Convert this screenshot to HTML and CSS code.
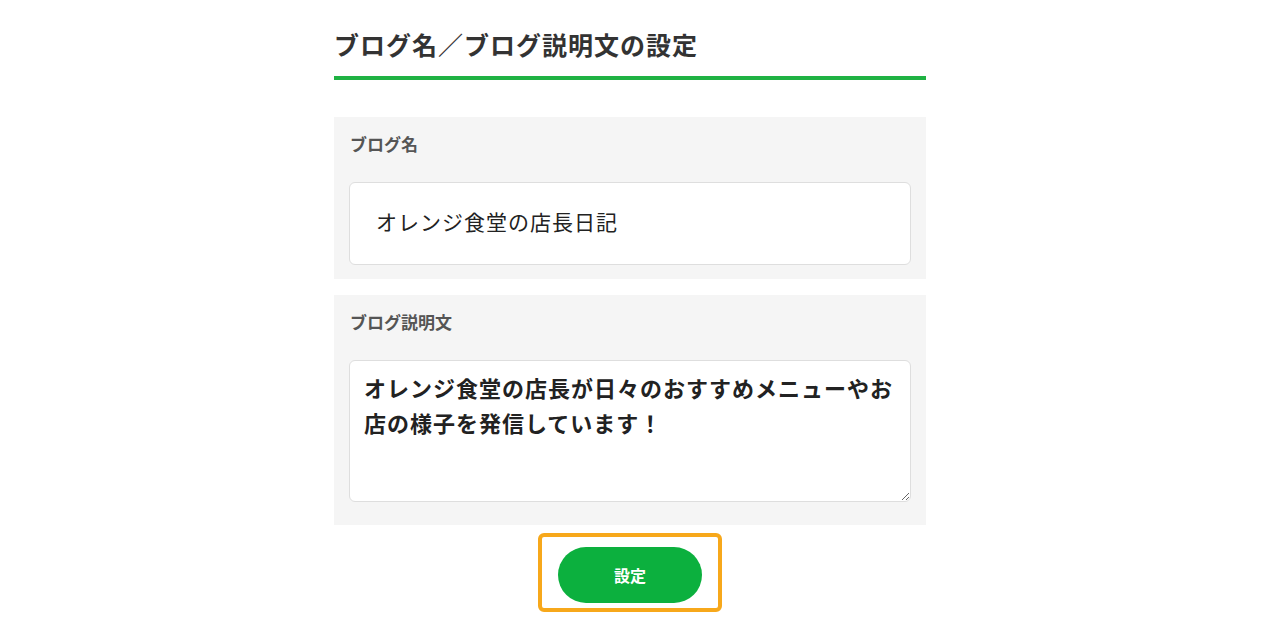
FILE: index.html
```html
<!DOCTYPE html>
<html lang="ja">
<head>
    <meta charset="UTF-8">
    <meta name="viewport" content="width=device-width, initial-scale=1.0">
    <title>ブログ名／ブログ説明文の設定</title>
    <link rel="stylesheet" href="styles.css">
</head>
<body>
    <div class="settings">
        <h1 class="title">ブログ名／ブログ説明文の設定</h1>

        <div class="field">
            <label class="field-label" for="blogName">ブログ名</label>
            <input class="text-input" id="blogName" type="text" value="オレンジ食堂の店長日記">
        </div>

        <div class="field field-desc">
            <label class="field-label" for="blogDesc">ブログ説明文</label>
            <textarea class="text-area" id="blogDesc">オレンジ食堂の店長が日々のおすすめメニューやお店の様子を発信しています！</textarea>
        </div>

        <div class="actions">
            <div class="highlight">
                <button class="submit">設定</button>
            </div>
        </div>
    </div>
</body>
</html>
```

FILE: styles.css
```css
body {
    margin: 0;
    padding-top: 26px;
    font-family: "Noto Sans CJK JP", "Noto Sans", sans-serif;
    color: #333;
    background: #fff;
}
.settings {
    width: 592px;
    margin: 0 auto;
    position: relative;
    left: -2px;
}
.title {
    margin: 0;
    font-size: 25px;
    line-height: 36px;
    font-weight: bold;
    letter-spacing: 1px;
    color: #333;
    padding-bottom: 14px;
    border-bottom: 4px solid #1fb243;
}
.field {
    margin-top: 37px;
    background: #f5f5f5;
    padding: 14px 15px 14px 15px;
}
.field-desc {
    margin-top: 16px;
    padding-bottom: 23px;
}
.field-label {
    display: block;
    font-size: 17px;
    line-height: 26px;
    font-weight: bold;
    color: #555;
    padding-left: 1px;
    margin-bottom: 25px;
}
.text-input {
    display: block;
    box-sizing: border-box;
    width: 562px;
    height: 83px;
    padding: 0 26px 6px;
    border: 1px solid #dedede;
    border-radius: 6px;
    background: #fff;
    font-family: inherit;
    font-size: 21px;
    letter-spacing: 1px;
    color: #222;
}
.text-area {
    display: block;
    box-sizing: border-box;
    width: 562px;
    height: 142px;
    padding: 9px 14px;
    border: 1px solid #dedede;
    border-radius: 6px;
    background: #fff;
    font-family: inherit;
    font-size: 22px;
    line-height: 35px;
    letter-spacing: 1px;
    font-weight: bold;
    color: #222;
}
.actions {
    display: flex;
    justify-content: center;
    margin-top: 8px;
}
.highlight {
    border: 4px solid #f7a81b;
    border-radius: 6px;
    padding: 10px 16px 5px;
}
.submit {
    display: block;
    width: 144px;
    height: 56px;
    border: none;
    border-radius: 28px;
    background: #0cb03e;
    color: #fff;
    font-family: inherit;
    font-size: 16px;
    font-weight: bold;
    cursor: pointer;
}
```
